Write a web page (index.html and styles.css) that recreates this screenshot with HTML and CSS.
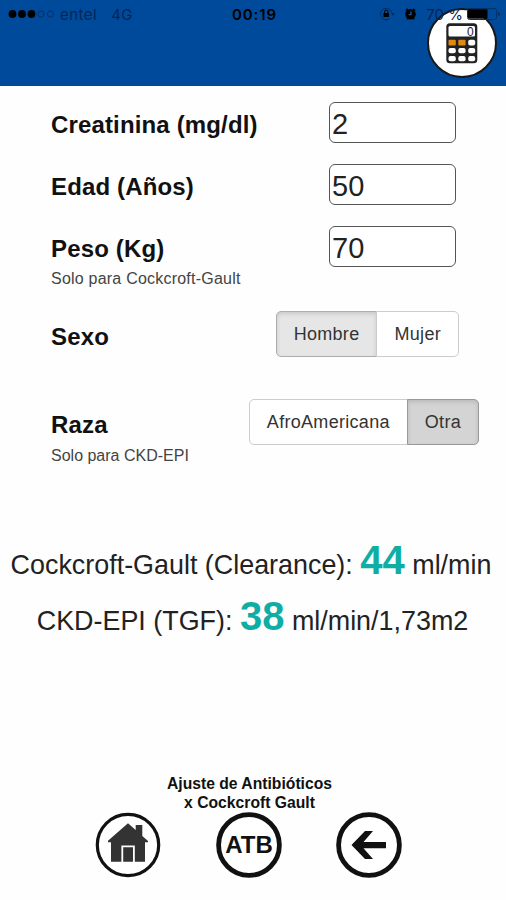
FILE: index.html
```html
<!DOCTYPE html>
<html lang="es">

<head>
    <meta charset="UTF-8">
    <meta name="viewport" content="width=device-width, initial-scale=1.0">
    <link rel="stylesheet" href="styles.css">
    <title>Clearance</title>
</head>

<body>
    <header>
        <svg class="calculator" viewBox="0 0 72 72">
            <circle cx="36" cy="36" r="34" fill="#fff" stroke="#181818" stroke-width="2" />
            <rect x="20.3" y="16.3" width="31" height="40" rx="3.5" fill="#222" />
            <rect x="22.5" y="19" width="26.5" height="10.5" rx="1.5" fill="#fff" />
            <text x="41" y="28.6">0</text>
            <rect x="22.5" y="32.7" width="7.3" height="5.8" rx="1" fill="#e18a13" />
            <rect x="32.3" y="32.7" width="7.3" height="5.8" rx="1" fill="#e18a13" />
            <rect x="42.2" y="32.7" width="7" height="5.8" rx="2" fill="#fff" />
            <rect x="22.5" y="41" width="7.3" height="5.3" rx="2" fill="#fff" />
            <rect x="32.3" y="41" width="7.3" height="5.3" rx="2" fill="#fff" />
            <rect x="42.2" y="41" width="7" height="5.3" rx="2" fill="#fff" />
            <rect x="22.5" y="49" width="7.3" height="5.3" rx="2" fill="#fff" />
            <rect x="32.3" y="49" width="7.3" height="5.3" rx="2" fill="#fff" />
            <rect x="42.2" y="49" width="7" height="5.3" rx="2" fill="#fff" />
        </svg>
        <div class="status">
            <div class="carrier">
                <svg width="48" height="12" viewBox="0 0 48 12">
                    <circle cx="4.5" cy="6" r="3.9" />
                    <circle cx="14" cy="6" r="3.9" />
                    <circle cx="23.5" cy="6" r="3.9" />
                    <g fill="none" stroke="#062f66">
                        <circle cx="33" cy="6" r="3.1" />
                        <circle cx="42.5" cy="6" r="3.1" />
                    </g>
                </svg>
                <span class="operator">entel</span>
                <span class="network">4G</span>
            </div>
            <div class="time">00:19</div>
            <div class="power">
                <svg class="lock" width="17" height="14" viewBox="0 0 17 14">
                    <path d="M10.5 11.8A5.8 5.8 0 1 1 12.7 5.5" fill="none" stroke="#052b60" />
                    <path d="M12 6h4l-2 3z" fill="#052b60" />
                    <rect x="4.5" y="6" width="5.5" height="4" />
                    <path d="M5.5 6V4.8a1.7 1.7 0 0 1 3.4 0V6" fill="none" stroke="#000" />
                </svg>
                <svg class="alarm" width="13" height="14" viewBox="0 0 13 14">
                    <circle cx="6.5" cy="7.2" r="5.3" />
                    <path d="M1.8 3.5L3.9 1.8M11.2 3.5L9.1 1.8M2.8 12.3l1-1.3M10.2 12.3L9.2 11" stroke="#000" stroke-width="1.2" />
                    <path d="M6.9 4.4v3.2H4.6" fill="none" stroke="#1956a2" stroke-width="1.4" />
                </svg>
                <span class="percent">70 %</span>
                <svg class="battery" width="34" height="12" viewBox="0 0 34 12">
                    <rect x="0.5" y="0.5" width="29" height="11" rx="2" fill="none" stroke="#062f66" />
                    <rect x="1" y="1.2" width="19.5" height="9.6" rx="1" />
                    <path d="M31 4v4q2-.5 2-2t-2-2z" fill="#062f66" />
                </svg>
            </div>
        </div>
    </header>

    <main>
        <div class="row">
            <label for="creatinina">Creatinina (mg/dl)</label>
            <input type="text" id="creatinina" value="2">
        </div>
        <div class="row">
            <label for="edad">Edad (Años)</label>
            <input type="text" id="edad" value="50">
        </div>
        <div class="row">
            <label for="peso">Peso (Kg)<small>Solo para Cockcroft-Gault</small></label>
            <input type="text" id="peso" value="70">
        </div>
        <div class="row sexo">
            <label>Sexo</label>
            <div class="group">
                <button class="active">Hombre</button>
                <button>Mujer</button>
            </div>
        </div>
        <div class="row raza">
            <label>Raza<small>Solo para CKD-EPI</small></label>
            <div class="group">
                <button>AfroAmericana</button>
                <button class="active">Otra</button>
            </div>
        </div>

        <div class="results">
            <p>Cockcroft-Gault (Clearance): <b>44</b> ml/min</p>
            <p>CKD-EPI (TGF): <b>38</b> ml/min/1,73m2</p>
        </div>
    </main>

    <footer>
        <p>Ajuste de Antibióticos<br>x Cockcroft Gault</p>
        <nav>
            <svg width="66" height="66" viewBox="0 0 66 66">
                <circle cx="33" cy="33" r="30.7" fill="#fff" stroke="#111" stroke-width="3.2" />
                <path d="M13 28.7L33 11.2l7.7 6.8v-5h6.6v11L53 29v1.2h-3V49.8H16V30.2h-3z" fill="#333" />
                <path d="M27.3 50V34.3h11.6V50" fill="none" stroke="#fff" stroke-width="1.8" />
            </svg>
            <svg width="66" height="66" viewBox="0 0 66 66">
                <circle cx="33" cy="33" r="30.4" fill="#fff" stroke="#111" stroke-width="4.8" />
                <text x="33" y="41" class="atb">ATB</text>
            </svg>
            <svg width="66" height="66" viewBox="0 0 66 66">
                <circle cx="33" cy="33" r="30.4" fill="#fff" stroke="#111" stroke-width="4.8" />
                <path d="M15.5 33L29 19h8L27.5 30H50v6.2H27.5L37 47h-8z" fill="#111" />
            </svg>
        </nav>
    </footer>
</body>

</html>
```
FILE: styles.css
```css
body {
    font-family: "Liberation Sans", Arial, sans-serif;
    margin: 0;
    height: 900px;
    background-color: #fefefe;
    color: #111;
    overflow: hidden;
}

header {
    position: relative;
    height: 86px;
    background-color: #004a9b;
}

.calculator {
    position: absolute;
    top: 7px;
    right: 8px;
    width: 72px;
    height: 72px;
}

.calculator text {
    font-size: 12px;
    fill: #222;
}

/* the status bar runs over the calculator badge */
.status {
    position: relative;
    display: grid;
    grid-template-columns: 1fr auto 1fr;
    align-items: center;
    height: 28px;
    padding: 0 5px 0 8px;
    font-family: Inter, "Liberation Sans", sans-serif;
    font-size: 15px;
    color: #000;
}

.carrier,
.power {
    display: flex;
    align-items: center;
}

.power {
    justify-content: flex-end;
}

.operator {
    margin-left: 4px;
    letter-spacing: 0.5px;
    color: #032653;
}

.network {
    margin-left: 14px;
    letter-spacing: 0.3px;
    color: #032653;
}

.time {
    font-weight: 600;
    letter-spacing: 0.9px;
}

.alarm {
    margin-left: 8px;
}

.percent {
    margin: 0 4px 0 9px;
    color: #032653;
}

.row {
    display: flex;
    justify-content: space-between;
    align-items: flex-start;
    height: 62px;
    padding: 0 50px 0 51px;
}

main {
    padding-top: 16px;
}

label {
    padding-top: 9px;
    font-size: 24px;
    line-height: 28px;
    font-weight: bold;
    letter-spacing: 0.15px;
}

small {
    display: block;
    padding-top: 5px;
    font-size: 16px;
    line-height: 22px;
    font-weight: normal;
    letter-spacing: 0.22px;
    color: #444;
}

input {
    box-sizing: border-box;
    width: 127px;
    height: 41px;
    padding: 4px 2px 0;
    border: 1px solid #555;
    border-radius: 6px;
    background-color: #fff;
    font-family: inherit;
    font-size: 29px;
    color: #222;
}

.sexo {
    height: 88px;
    padding: 22px 47px 0 51px;
    box-sizing: border-box;
    margin-top: 1px;
}

.sexo label {
    padding-top: 12px;
}

.raza {
    height: 90px;
    padding-right: 27px;
    box-sizing: border-box;
    padding-top: 22px;
}

.raza label {
    padding-top: 12px;
}

.raza small {
    padding-top: 6px;
    letter-spacing: 0;
}

.group {
    display: flex;
}

button {
    height: 46px;
    padding: 0 17px;
    border: 1px solid #ccc;
    background-color: #fff;
    font-family: inherit;
    font-size: 18px;
    letter-spacing: 0.3px;
    color: #333;
}

button:first-child {
    border-radius: 5px 0 0 5px;
}

button:last-child {
    margin-left: -1px;
    border-radius: 0 5px 5px 0;
}

button.active {
    border-color: #adadad;
    background-color: #e6e6e6;
    box-shadow: inset 0 2px 4px rgba(0, 0, 0, 0.13);
}

.raza button.active {
    border-color: #999;
    background-color: #d4d4d4;
}

.results {
    padding: 70px 4px 0 0;
    text-align: center;
    white-space: nowrap;
}

.results p {
    margin: 0;
    font-size: 26.9px;
    line-height: 56px;
    color: #222;
}

.results p + p {
    padding-left: 3px;
}

.results b {
    font-size: 40px;
    line-height: 40px;
    color: #10ada5;
}

footer p {
    margin: 125px 0 0;
    padding-right: 7px;
    text-align: center;
    font-size: 15.7px;
    line-height: 19px;
    font-weight: bold;
}

nav {
    display: flex;
    gap: 54.5px;
    padding-left: 95px;
}

.atb {
    font-size: 24px;
    font-weight: bold;
    text-anchor: middle;
    fill: #111;
}
```
